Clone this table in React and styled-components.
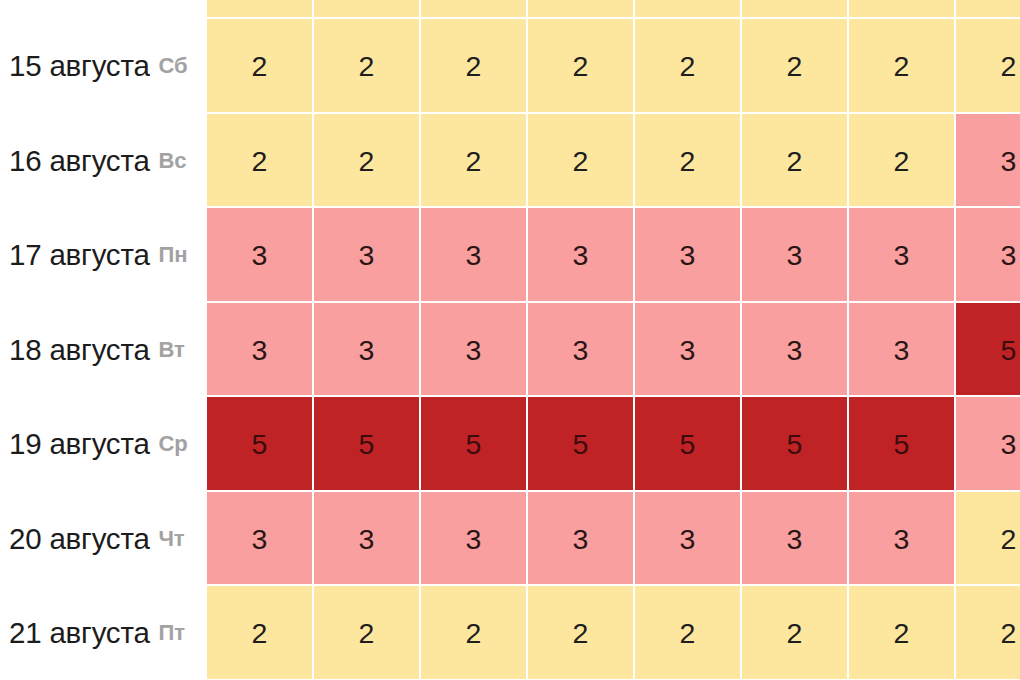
import React from "react";
import styled, { createGlobalStyle } from "styled-components";

const Global = createGlobalStyle`
  html, body { margin: 0; padding: 0; background: #ffffff; overflow: hidden; }
  body { font-family: "Liberation Sans", Arial, sans-serif; }
`;

const Page = styled.div`
  width: 1020px;
  height: 680px;
  overflow: hidden;
  background: #ffffff;
`;

const Table = styled.div`
  display: grid;
  grid-template-columns: 205px repeat(8, 105px);
  grid-auto-rows: 92.5px;
  grid-template-rows: 17px;
  column-gap: 2px;
  row-gap: 2px;
`;

const Label = styled.div`
  display: flex;
  align-items: center;
  padding-left: 9px;
  padding-top: 2px;
  white-space: nowrap;
  font-size: 29.5px;
  color: #1c1c1c;
  letter-spacing: -0.2px;
`;

const Day = styled.span`
  margin-left: 9px;
  font-size: 22px;
  font-weight: 700;
  color: #a2a2a2;
`;

const palette = {
  2: { bg: "#fde79f", fg: "#1e1e1e" },
  3: { bg: "#fa9f9f", fg: "#2a1515" },
  5: { bg: "#c02326", fg: "#3c0c0c" },
};

const Cell = styled.div`
  display: flex;
  align-items: center;
  justify-content: center;
  background: ${(p) => palette[p.$level].bg};
  color: ${(p) => palette[p.$level].fg};
  font-size: 28.5px;
  padding-top: 3px;
`;

const rows = [
  { date: "15 августа", day: "Сб", v: [2, 2, 2, 2, 2, 2, 2, 2] },
  { date: "16 августа", day: "Вс", v: [2, 2, 2, 2, 2, 2, 2, 3] },
  { date: "17 августа", day: "Пн", v: [3, 3, 3, 3, 3, 3, 3, 3] },
  { date: "18 августа", day: "Вт", v: [3, 3, 3, 3, 3, 3, 3, 5] },
  { date: "19 августа", day: "Ср", v: [5, 5, 5, 5, 5, 5, 5, 3] },
  { date: "20 августа", day: "Чт", v: [3, 3, 3, 3, 3, 3, 3, 2] },
  { date: "21 августа", day: "Пт", v: [2, 2, 2, 2, 2, 2, 2, 2] },
];

export default function App() {
  return (
    <Page>
      <Global />
      <Table>
        <Label />
        {Array.from({ length: 8 }).map((_, i) => (
          <Cell key={"t" + i} $level={2} />
        ))}
        {rows.map((r) => (
          <React.Fragment key={r.date}>
            <Label>
              {r.date}
              <Day>{r.day}</Day>
            </Label>
            {r.v.map((n, i) => (
              <Cell key={i} $level={n}>
                {n}
              </Cell>
            ))}
          </React.Fragment>
        ))}
      </Table>
    </Page>
  );
}
